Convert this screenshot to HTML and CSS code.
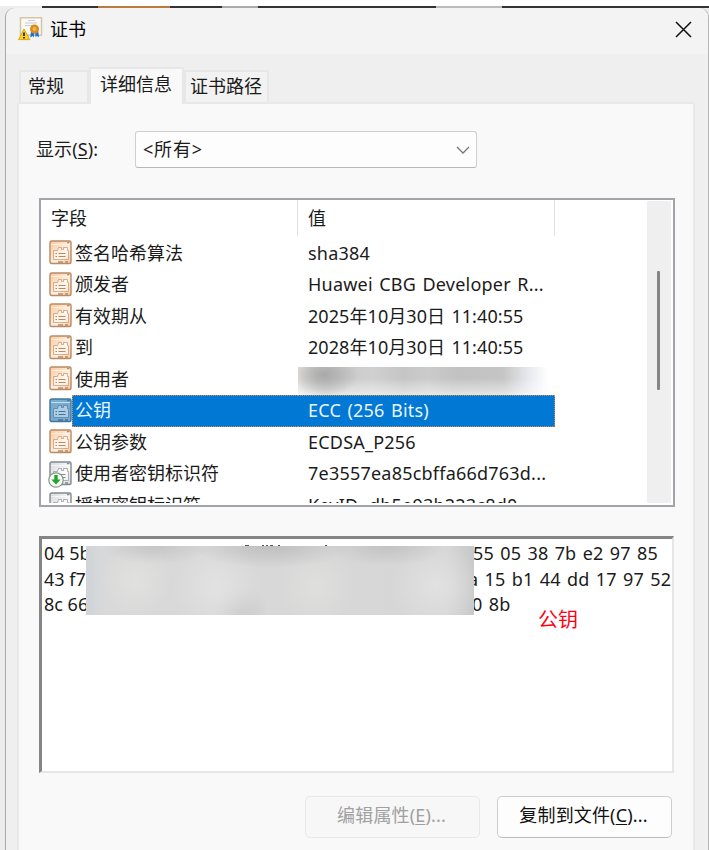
FILE: index.html
```html
<!DOCTYPE html>
<html lang="zh-CN">
<head>
<meta charset="utf-8">
<title>证书</title>
<link rel="stylesheet" href="styles.css">
</head>
<body>
<svg class="defs" width="0" height="0">
  <defs>
    <linearGradient id="paper" x1="0" y1="0" x2="1" y2="1"><stop offset="0" stop-color="#fdc89c"/><stop offset=".6" stop-color="#fff0e2"/><stop offset="1" stop-color="#f7c79d"/></linearGradient>
    <linearGradient id="steel" x1="0" y1="0" x2="1" y2="1"><stop offset="0" stop-color="#d5d8db"/><stop offset=".6" stop-color="#fafafa"/><stop offset="1" stop-color="#d5d9dc"/></linearGradient>
    <symbol id="field" viewBox="0 0 24 25">
      <rect x="1" y="1" width="21" height="22.5" rx="1.5" stroke="currentColor" stroke-width="1.4"/>
      <path d="M2 4.500h19" stroke="#fff" stroke-opacity=".6" stroke-width="1"/>
      <path d="M18 2.500h2.500" stroke="currentColor" stroke-width="1.500"/>
      <path d="M4.500 10.500h4l1-3h3v2h2v-2h4v3h1v9h-15z" fill="#fff" fill-opacity=".4" stroke="currentColor" stroke-opacity=".7" stroke-width=".9"/>
      <path d="M6.500 13.500h1.500m1.500 0h7M6.500 16.500h1.500m1.500 0h7" stroke="currentColor" stroke-width="1" fill="none"/>
      <path d="M9 22h5m2 0h3" stroke="currentColor" stroke-width="1.600"/>
    </symbol>
  </defs>
</svg>
<div class="backdrop"></div>
<main class="dialog">
  <header class="titlebar">
    <svg class="cert" width="25" height="25" viewBox="0 0 25 25">
      <rect x="2.500" y=".7" width="21" height="17.500" fill="#fbfaf5" stroke="#d2c5ab" stroke-width="1.500"/>
      <path d="M10 3.500h7M7 6h12M7 8.500h9" stroke="#b9c3d2" stroke-width=".8"/>
      <path d="M13 14l-.7 6.500 2.400-1.500 1 1.500 1-6zM17 14l.5 6 1.500-1 2 1.200-.8-6.500z" fill="#1c71dc"/>
      <circle cx="16.500" cy="12" r="4.500" fill="#dd8a1c"/><circle cx="16.500" cy="12" r="2" fill="#f3b64c"/>
      <path d="M6 12L.6 22.600h11.200z" fill="#ffd31c" stroke="#d9a514" stroke-width="1" stroke-linejoin="round"/>
      <path d="M6 15.500v3.500M6 20v1.500" stroke="#222" stroke-width="1.700"/>
    </svg>
    <span class="title">证书</span>
    <svg class="close" width="17" height="17" viewBox="0 0 17 17"><path d="M1 1l15 15M16 1L1 16" stroke="#111" stroke-width="1.500"/></svg>
  </header>
  <nav class="tabs">
    <span class="tab general">常规</span><span class="tab active">详细信息</span><span class="tab path">证书路径</span>
  </nav>
  <section class="panel">
    <div class="show">
      <span class="label">显示(<u>S</u>):</span>
      <div class="select"><span>&lt;所有&gt;</span>
        <svg width="14" height="8" viewBox="0 0 14 8"><path d="M1 1l6 6 6-6" fill="none" stroke="#777" stroke-width="1.300"/></svg>
      </div>
    </div>
    <div class="list">
      <div class="table">
        <div class="head"><span>字段</span><span>值</span></div>
        <div class="row"><svg class="ico"><use href="#field"/></svg><span class="name">签名哈希算法</span><span class="val">sha384</span></div>
        <div class="row"><svg class="ico"><use href="#field"/></svg><span class="name">颁发者</span><span class="val">Huawei CBG Developer R...</span></div>
        <div class="row"><svg class="ico"><use href="#field"/></svg><span class="name">有效期从</span><span class="val date">2025年10月30日 11:40:55</span></div>
        <div class="row"><svg class="ico"><use href="#field"/></svg><span class="name">到</span><span class="val date">2028年10月30日 11:40:55</span></div>
        <div class="row"><svg class="ico"><use href="#field"/></svg><span class="name">使用者</span><span class="smudge"></span></div>
        <div class="row selected"><svg class="ico"><use href="#field"/></svg><span class="name">公钥</span><span class="val">ECC (256 Bits)</span></div>
        <div class="row"><svg class="ico"><use href="#field"/></svg><span class="name">公钥参数</span><span class="val">ECDSA_P256</span></div>
        <div class="row ext"><svg class="ico"><use href="#field"/></svg>
          <svg class="badge" width="16" height="16" viewBox="0 0 16 16"><circle cx="8" cy="8" r="7.200" fill="#f7faf7" stroke="#83978a" stroke-width="1.200"/><path d="M6.300 3h3.400v4.500h3L8 12.600 3.300 7.500h3z" fill="#22a52b"/></svg>
          <span class="name">使用者密钥标识符</span><span class="val">7e3557ea85cbffa66d763d...</span></div>
        <div class="row ext"><svg class="ico"><use href="#field"/></svg><span class="name">授权密钥标识符</span><span class="val">KeyID=db5e93b223c8d0</span></div>
      </div>
      <div class="scroll"><div class="thumb"></div></div>
    </div>
    <div class="detail">
      <div class="line"><span>04 5b</span><span class="tail t1">55 05 38 7b e2 97 85</span></div>
      <div class="line"><span>43 f7</span><span class="tail t2">a 15 b1 44 dd 17 97 52</span></div>
      <div class="line"><span>8c 66</span><span class="tail t3">0 8b</span></div>
      <div class="mask"></div>
      <svg class="specks" width="240" height="2" viewBox="0 0 240 2"><path d="M0 1.500h4M17 1.500h2m2 0h2m2 0h3m5 0h2M80 1.500h2" stroke="#555" stroke-width="1"/></svg>
      <span class="note">公钥</span>
    </div>
    <div class="buttons">
      <button class="btn" disabled>编辑属性(<u>E</u>)...</button>
      <button class="btn">复制到文件(<u>C</u>)...</button>
    </div>
  </section>
</main>
</body>
</html>
```
FILE: styles.css
```css
* { box-sizing: border-box; }
body {
  margin: 0;
  width: 709px;
  height: 850px;
  overflow: hidden;
  background: #ececec;
  font: 18px/25px "Noto Sans", "Noto Sans CJK SC", sans-serif;
  color: #1b1b1b;
}
.defs { position: absolute; }
u { text-decoration-thickness: 1px; text-underline-offset: 2px; }
.backdrop {
  height: 8px;
  border-top: 6px solid #fff;
  background: linear-gradient(90deg, #eee 42px, #333 42px 98px, #b87c3e 98px 170px, #333 170px 222px, #aaa 222px 258px, #333 258px 436px, #bbb 436px 502px, #333 502px);
}
.dialog {
  display: flex;
  flex-direction: column;
  width: 703px;
  height: 842px;
  margin-left: 5px;
  padding: 0 13px 0 11px;
  border: solid #a9a9a9;
  border-width: 0 0 0 1px;
  border-radius: 9px 9px 0 0;
  background: linear-gradient(#f3f3f3 46px, #efefef 46px);
  box-shadow: 1px 0 #b5b5b5;
}
.titlebar { display: flex; height: 59px; flex: none; }
.cert { margin: 9px 0 0 1px; }
.title { margin: 9px 0 0 7px; color: #000; }
.close { margin: 13px 3px 0 auto; }
.tabs { display: flex; align-items: flex-end; height: 36px; flex: none; padding-left: 2px; }
.tab {
  height: 33px;
  border: 2px solid #e7e7e7;
  border-bottom: 0;
  background: #f2f2f2;
  white-space: nowrap;
  padding: 2px 0 0 7px;
}
.general { width: 70px; }
.active { width: 95px; height: 37px; padding: 3px 0 0 9px; background: #f9f9f9; z-index: 1; margin-bottom: -1px; }
.path { width: 85px; padding-left: 4px; }
.panel {
  flex: 1;
  width: 678px;
  margin-top: -1px;
  padding: 27px 17px 0 20px;
  border: solid #e8e8e8;
  border-width: 2px 2px 0 2px;
  background: #f9f9f9;
}
.show { display: flex; align-items: center; height: 37px; }
.label { width: 99px; margin-left: -3px; letter-spacing: .1px; }
.select {
  display: flex;
  align-items: center;
  justify-content: space-between;
  width: 342px;
  height: 37px;
  border: 1px solid #cfcfcf;
  border-bottom-color: #b8b8b8;
  border-radius: 3px;
  background: #fdfdfd;
  padding: 0 6px 0 7px;
}
.select span { letter-spacing: .8px; }
.list {
  display: flex;
  width: 636px;
  height: 309px;
  margin-top: 30px;
  padding: 0 2px 2px 0;
  border: 2px solid #a1a5aa;
  background: #fff;
}
.table { width: 514px; overflow: hidden; }
.head { display: flex; height: 37.5px; }
.head span { width: 257px; height: 36px; border-right: 1px solid #e2e2e2; padding: 6px 0 0 10px; }
.head span + span { padding-left: 10px; }
.row { position: relative; display: flex; align-items: center; height: 31.5px; white-space: nowrap; }
.ico { width: 24px; height: 25px; margin: -1px 0 0 8px; flex: none; color: #b98a64; fill: url(#paper); }
.name { width: 226px; height: 31.5px; padding: 3px 0 0 3px; flex: none; margin-left: -1px; }
.val { padding-left: 10px; letter-spacing: .22px; word-spacing: 1.5px; }
.date { letter-spacing: .07px; }
.selected .name, .selected .val { background: #0078d4; color: #e9f5ff; height: 31.5px; padding-top: 2px; border: dotted #d98b4c; border-width: 1px 0; }
.selected .name { border-left-width: 1px; padding-left: 2px; }
.selected .val { flex: 1; border-right-width: 1px; }
.selected .ico { color: #42749c; fill: #78acd0; }
.ext .ico { color: #83898e; fill: url(#steel); }
.badge { position: absolute; left: 7px; top: 14px; }
.smudge {
  width: 252px;
  height: 28px;
  align-self: flex-end;
  background: radial-gradient(ellipse 35px 22px at 26px 8px, #a9a9a9, #a9a9a900), linear-gradient(#fff0 40%, #ffffff90), linear-gradient(90deg, #e8e6e4, #c9c9c9 28px, #d0d0d0 75px, #c5c5c5 105px, #cbcbcb 130px, #c2c2c2 160px, #c5c5c5 205px, #e6e8ed 230px, #fff 250px);
}
.scroll { width: 24px; margin: 1px 0 0 auto; background: #efefef; padding: 70px 0 0 10px; }
.thumb { width: 3px; height: 119px; border-radius: 1px; background: #858585; }
.detail {
  position: relative;
  width: 635px;
  height: 237px;
  margin-top: 29px;
  border: solid #858585;
  border-width: 3px 2px 2px 3px;
  border-right-color: #e6e6e6;
  border-bottom-color: #e6e6e6;
  background: #fff;
  padding: 2px 0 0 2px;
}
.line { display: flex; height: 25.5px; white-space: nowrap; }
.line span:first-child { width: 45px; }
.tail { margin-left: 384px; letter-spacing: .15px; word-spacing: 1.5px; }
.t2 { margin-left: 379px; }
.t3 { margin-left: 383px; }
.mask {
  position: absolute;
  left: 44px;
  top: 7px;
  width: 388px;
  height: 69px;
  background:
    radial-gradient(ellipse 55px 18px at 70px 0, #c5c5c5, #c5c5c500),
    radial-gradient(ellipse 80px 22px at 185px 0, #bebebe, #bebebe00),
    radial-gradient(ellipse 60px 20px at 300px 0, #c2c2c2, #c2c2c200),
    radial-gradient(circle at 50px 35px, #e1e1e0, #e1e1e000 35px),
    radial-gradient(circle at 130px 40px, #e2e2e2, #e2e2e200 45px),
    radial-gradient(circle at 155px 68px, #cacaca, #cacaca00 28px),
    radial-gradient(circle at 230px 40px, #dfdfde, #dfdfde00 40px),
    radial-gradient(circle at 350px 40px, #e1e1e1, #e1e1e100 45px),
    linear-gradient(90deg, #d0d4d8, #d9d9d9 20px, #d6d6d6 360px, #c8c8c8);
}
.specks { position: absolute; left: 203px; top: 5px; }
.note { position: absolute; left: 496px; top: 67px; font-size: 20px; line-height: 28px; color: #ff0018; font-weight: 400; }
.buttons { display: flex; gap: 17px; justify-content: flex-end; margin: 23px 4px 0 0; }
.btn {
  width: 175px;
  height: 42px;
  border: 1px solid #cdcdcd;
  border-bottom-color: #bbb;
  border-radius: 5px;
  background: #fdfdfd;
  font: inherit;
  color: #111;
  letter-spacing: .15px;
  padding: 0 2px 3px 0;
}
.btn:disabled { border-color: #e8e8e8; background: #f7f7f7; color: #a0a0a0; }
```
